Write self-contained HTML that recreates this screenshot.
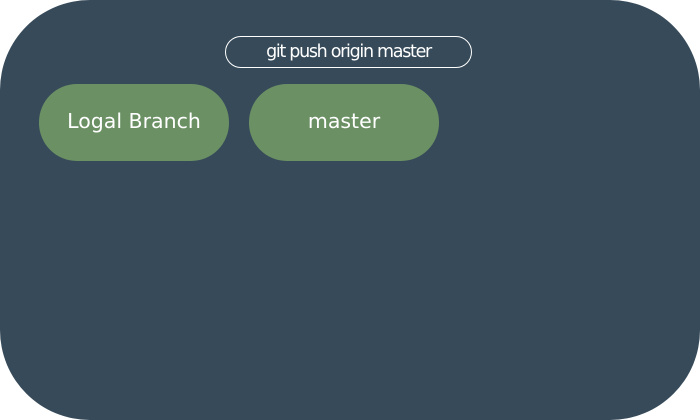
<!DOCTYPE html>
<html><head><style>
body{margin:0;width:700px;height:420px;background:#fff;overflow:hidden;font-family:"DejaVu Sans",sans-serif}
.bg{position:absolute;left:0;top:0;width:700px;height:420px;background:#364a59;border-radius:90px/90px}
.pill{position:absolute;left:225px;top:36px;width:245px;height:30px;border:1.3px solid #fff;border-radius:16px;color:#fff;font-size:17.5px;letter-spacing:-1.3px;text-align:center;line-height:30px}
.b{position:absolute;top:84px;width:190px;height:77px;background:#6b9064;border-radius:38px;color:#fff;font-size:20.5px;text-align:center;line-height:75px}
</style></head><body>
<div class="bg"></div>
<div class="pill">git push origin master</div>
<div class="b" style="left:39px">Logal Branch</div>
<div class="b" style="left:249px">master</div>
</body></html>
